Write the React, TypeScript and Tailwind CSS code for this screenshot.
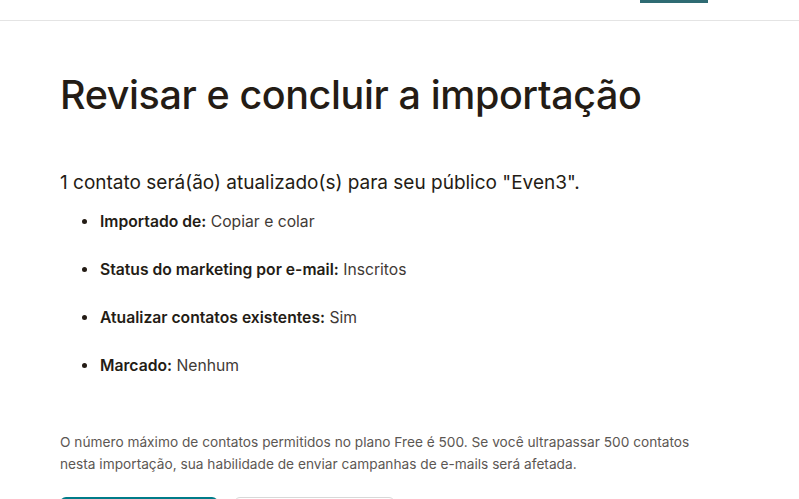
import React from "react";

const items = [
  { label: "Importado de:", value: "Copiar e colar" },
  { label: "Status do marketing por e-mail:", value: "Inscritos" },
  { label: "Atualizar contatos existentes:", value: "Sim" },
  { label: "Marcado:", value: "Nenhum" },
];

export default function App() {
  return (
    <div className="w-[799px] h-[499px] overflow-hidden bg-white text-[#241c15] font-['Inter','Noto_Sans',sans-serif]">
      {/* Top nav, scrolled mostly out of view */}
      <div className="h-[21px] border-b border-[#e4e4e4] flex items-start">
        <div className="ml-[640px] w-[68px] h-[3px] bg-[#2f6b73]" />
      </div>

      <main className="px-[60px]">
        <h1 className="mt-[50px] text-[39.5px] leading-[48px] font-medium tracking-[-0.4px]">
          Revisar e concluir a importação
        </h1>

        <p className="mt-[50px] text-[19px] leading-[28px]">
          1 contato será(ão) atualizado(s) para seu público "Even3".
        </p>

        <ul className="mt-[13px] pl-[39px] list-disc text-[15.7px] leading-[24px] flex flex-col gap-[24px] marker:text-[#241c15]">
          {items.map((item) => (
            <li key={item.label} className="pl-[1px]">
              <span className="font-semibold">{item.label}</span>{" "}
              <span className="text-[#3f3a36]">{item.value}</span>
            </li>
          ))}
        </ul>

        <p className="mt-[53px] text-[13.7px] leading-[22px] text-[#5c5753] w-[645px]">
          O número máximo de contatos permitidos no plano Free é 500. Se você ultrapassar 500 contatos nesta importação, sua habilidade de enviar campanhas de e-mails será afetada.
        </p>

        <div className="mt-[22px] flex gap-[16px]">
          <button className="w-[158px] h-[40px] rounded-[6px] bg-[#007c89] text-white text-[15px]">
            Concluir importação
          </button>
          <button className="w-[161px] h-[40px] rounded-[6px] border border-[#d8d8d8] bg-white text-[#007c89] text-[15px]">
            Voltar
          </button>
        </div>
      </main>
    </div>
  );
}
